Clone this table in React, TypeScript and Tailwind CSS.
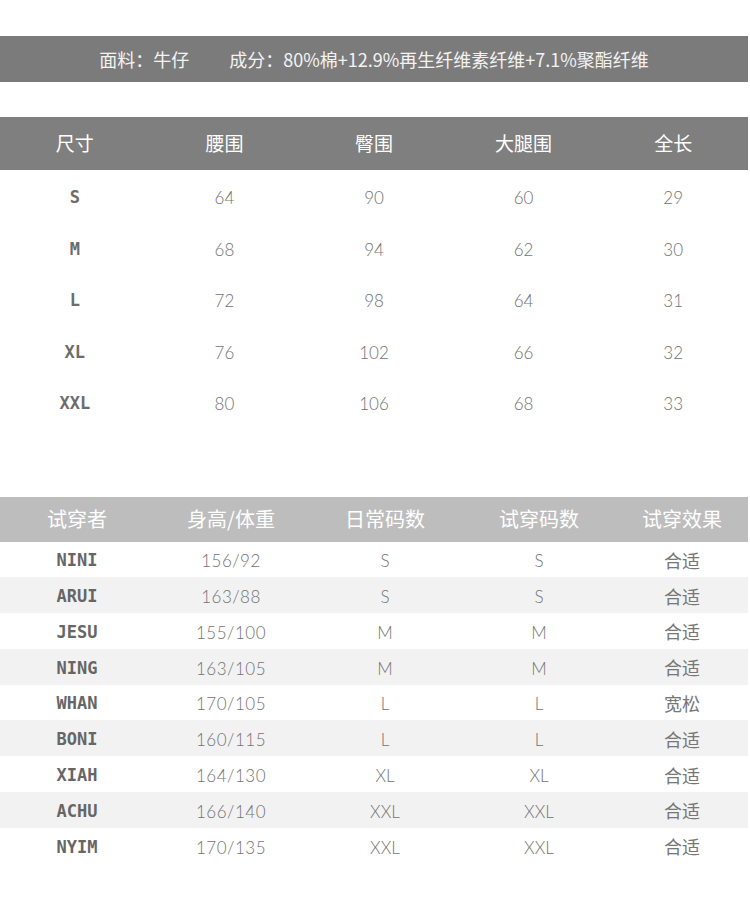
const sizes = [
  ["S", "64", "90", "60", "29"],
  ["M", "68", "94", "62", "30"],
  ["L", "72", "98", "64", "31"],
  ["XL", "76", "102", "66", "32"],
  ["XXL", "80", "106", "68", "33"],
];

const fits = [
  ["NINI", "156/92", "S", "S", "合适"],
  ["ARUI", "163/88", "S", "S", "合适"],
  ["JESU", "155/100", "M", "M", "合适"],
  ["NING", "163/105", "M", "M", "合适"],
  ["WHAN", "170/105", "L", "L", "宽松"],
  ["BONI", "160/115", "L", "L", "合适"],
  ["XIAH", "164/130", "XL", "XL", "合适"],
  ["ACHU", "166/140", "XXL", "XXL", "合适"],
  ["NYIM", "170/135", "XXL", "XXL", "合适"],
];

const cjk = "font-['Noto_Sans_CJK_SC',sans-serif]";
const thin = "font-['Lato','Noto_Sans_CJK_SC',sans-serif] font-light";
const mono = "font-['DejaVu_Sans_Mono',monospace] font-bold";

export default function App() {
  return (
    <div className="w-[750px] h-[912px] bg-white overflow-hidden pt-9">
      <div className={`w-[748px] h-[46px] bg-[#7b7b7b] flex items-center justify-center gap-[40px] text-[18px] text-[#f3f3f3] ${cjk}`}>
        <span>面料：牛仔</span>
        <span>成分：80%棉+12.9%再生纤维素纤维+7.1%聚酯纤维</span>
      </div>

      <div className="w-[748px] mt-[35px]">
        <div className={`h-[53px] bg-[#7f7f7f] grid grid-cols-5 items-center text-center text-[19px] text-white ${cjk}`}>
          <span>尺寸</span>
          <span>腰围</span>
          <span>臀围</span>
          <span>大腿围</span>
          <span>全长</span>
        </div>
        <div className="pt-[2px]">
          {sizes.map((r) => (
            <div key={r[0]} className="h-[51.5px] grid grid-cols-5 items-center text-center">
              <span className={`${mono} text-[17px] text-[#6c6c6c]`}>{r[0]}</span>
              {r.slice(1).map((v, i) => (
                <span key={i} className={`${thin} text-[17px] text-[#727272]`}>{v}</span>
              ))}
            </div>
          ))}
        </div>
      </div>

      <div className="w-[748px] mt-[67px]">
        <div className={`h-[45px] bg-[#bdbdbd] grid grid-cols-[154px_154px_154px_154px_1fr] items-center text-center text-[20px] text-white ${cjk}`}>
          <span>试穿者</span>
          <span>身高/体重</span>
          <span>日常码数</span>
          <span>试穿码数</span>
          <span>试穿效果</span>
        </div>
        {fits.map((r, idx) => (
          <div
            key={r[0]}
            className={`h-[35.8px] grid grid-cols-[154px_154px_154px_154px_1fr] items-center text-center ${idx % 2 === 1 ? "bg-[#f2f2f2]" : "bg-white"}`}
          >
            <span className={`${mono} text-[17px] text-[#666666] pt-[3px]`}>{r[0]}</span>
            <span className={`${thin} text-[17px] text-[#737373] tracking-[0.5px] pt-[3px]`}>{r[1]}</span>
            <span className={`${thin} text-[17px] text-[#737373] pt-[3px]`}>{r[2]}</span>
            <span className={`${thin} text-[17px] text-[#737373] pt-[3px]`}>{r[3]}</span>
            <span className={`${cjk} text-[18px] text-[#777777] pt-[2px]`}>{r[4]}</span>
          </div>
        ))}
      </div>
    </div>
  );
}
